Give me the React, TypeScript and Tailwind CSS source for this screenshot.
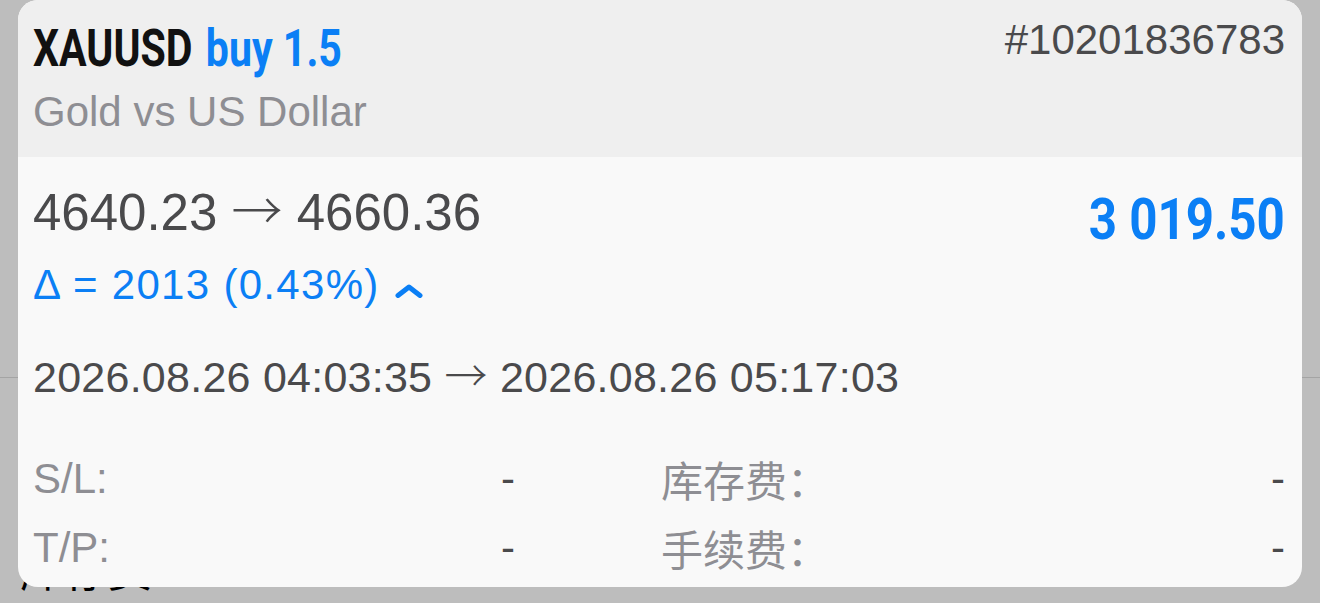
import React from "react"

const sans = "font-['Liberation_Sans','Noto_Sans_CJK_SC',sans-serif]"
const cjk = "font-['Noto_Sans_CJK_SC',sans-serif]"
const cond = "font-['Roboto',sans-serif]"
// iOS draws the arrow as a thin full-width glyph
const arrow = "font-['Noto_Sans_CJK_SC',sans-serif] font-light"

function ChevronUp() {
  return (
    <svg width="28" height="14" viewBox="0 0 28 14" className="ml-[15px] mt-[20px] shrink-0">
      <polyline points="3,11.5 14,3 25,11.5" fill="none" stroke="#0b7ff5" strokeWidth="5" strokeLinecap="round" strokeLinejoin="round" />
    </svg>
  )
}

function Field({ label, value, cn }: { label: string; value: string; cn?: boolean }) {
  return (
    <div className="flex items-start justify-between">
      <span className={`${cn ? cjk : sans} text-[42px] leading-none text-[#8e8e93]`}>{label}</span>
      <span className={`${sans} text-[42px] leading-none text-[#4a4a4c]`}>{value}</span>
    </div>
  )
}

export default function App() {
  return (
    <div className="relative h-[603px] w-[1320px] overflow-hidden bg-[#bdbdbd]">
      {/* page behind the sheet */}
      <div className="absolute left-0 right-0 top-[377px] h-px bg-[#a4a4a4]" />
      <div className={`absolute left-[20px] top-[546px] ${cjk} text-[44px] leading-none text-black`}>库存费</div>

      <div className="relative mx-[18px] h-[587px] overflow-hidden rounded-[20px] bg-[#f9f9f9]">
        {/* header */}
        <div className="flex h-[157px] items-start justify-between bg-[#efefef] pl-[15px] pr-[17px]">
          <div>
            <div className={`${cond} mt-[23px] origin-left scale-x-[0.79] whitespace-nowrap text-[52px] font-bold leading-none text-[#111]`}>
              XAUUSD <span className="ml-[4px] text-[#0b7ff5]">buy 1.5</span>
            </div>
            <div className={`${sans} mt-[16px] text-[42px] leading-none text-[#8e8e93]`}>Gold vs US Dollar</div>
          </div>
          <div className={`${sans} mt-[19px] text-[42px] leading-none text-[#4a4a4c]`}>#10201836783</div>
        </div>

        {/* body */}
        <div className="pl-[15px] pr-[17px]">
          <div className="flex items-start justify-between pt-[29px]">
            <div>
              <div className={`${sans} -mt-[3px] h-[53px] whitespace-nowrap text-[51px] leading-none text-[#4a4a4c]`}>
                4640.23 <span className={arrow}>→</span> 4660.36
              </div>
              <div className="mt-[28px] flex items-start">
                <span className={`${sans} text-[42px] leading-none tracking-[1.3px] text-[#0b7ff5]`}>Δ = 2013 (0.43%)</span>
                <ChevronUp />
              </div>
            </div>
            <div className={`${cond} mt-[4px] origin-right scale-x-[0.85] whitespace-nowrap text-[58px] font-bold leading-none text-[#0b7ff5]`}>
              3 019.50
            </div>
          </div>

          <div className={`${sans} mt-[46px] h-[46px] whitespace-nowrap text-[43px] leading-none tracking-[0.25px] text-[#4a4a4c]`}>
            2026.08.26 04:03:35 <span className={arrow}>→</span> 2026.08.26 05:17:03
          </div>

          <div className="mt-[60px] grid grid-cols-[482px_1fr] gap-x-[146px] gap-y-[27px]">
            <Field label="S/L:" value="-" />
            <Field label="库存费：" value="-" cn />
            <Field label="T/P:" value="-" />
            <Field label="手续费：" value="-" cn />
          </div>
        </div>
      </div>
    </div>
  )
}
